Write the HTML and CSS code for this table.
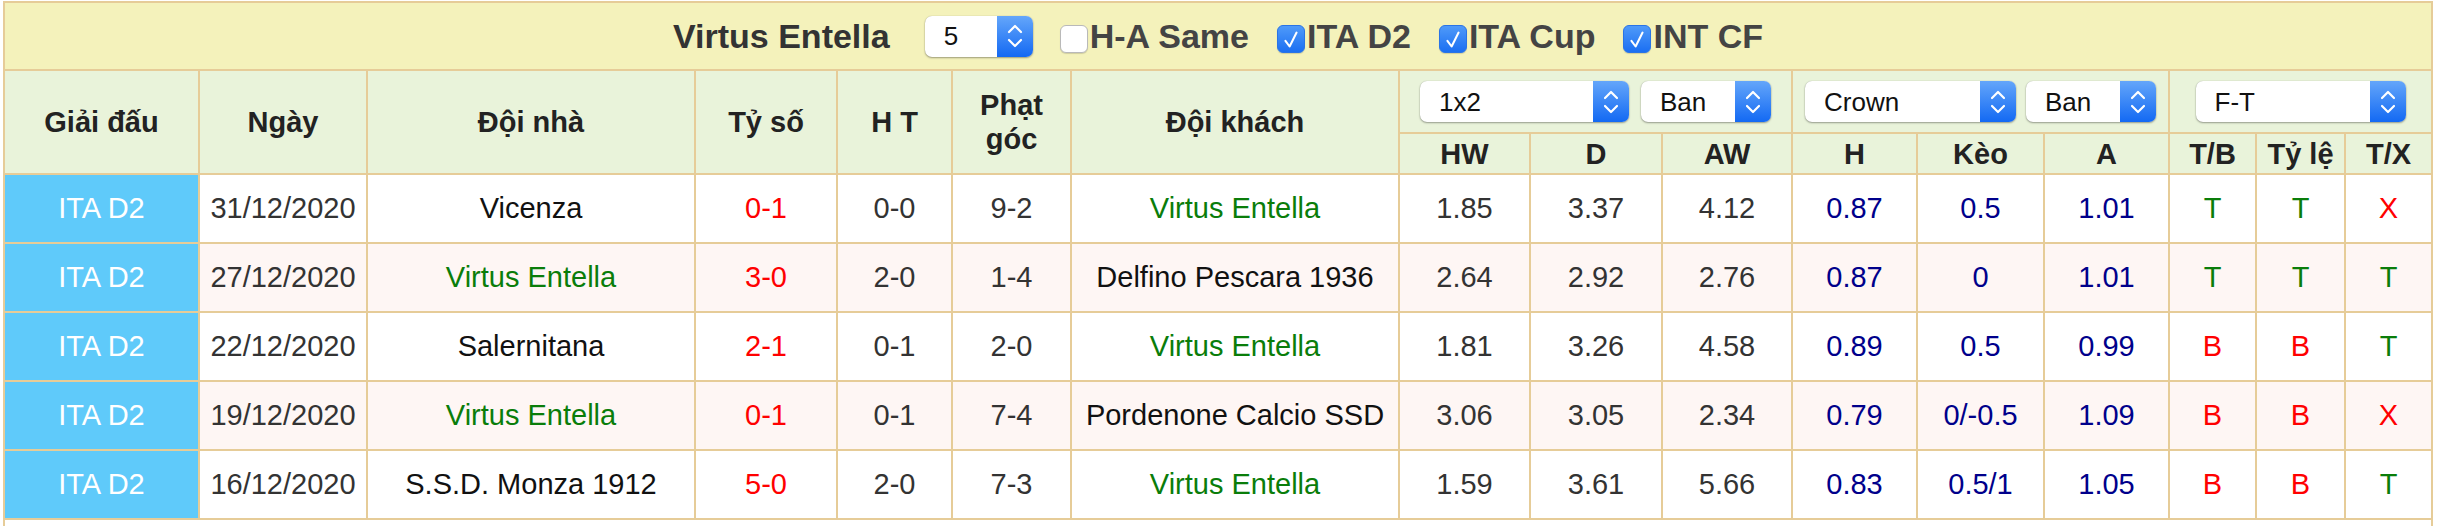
FILE: index.html
```html
<!DOCTYPE html>
<html lang="vi">
<head>
<meta charset="utf-8">
<title>Virtus Entella</title>
<link rel="stylesheet" href="styles.css">
</head>
<body>
<div class="wrap">
<table class="grid">
  <colgroup>
    <col class="w-league"><col class="w-date"><col class="w-team"><col class="w-score">
    <col class="w-ht"><col class="w-corner"><col class="w-team"><col class="w-hw">
    <col class="w-d"><col class="w-aw"><col class="w-h"><col class="w-keo">
    <col class="w-a"><col class="w-tb"><col class="w-tl"><col class="w-tx">
  </colgroup>
  <tr class="title-row">
    <td colspan="16">
      <div class="toolbar">
        <span class="team-title">Virtus Entella</span>
        <div class="sel sel-count"><span class="sel-text">5</span><span class="sel-btn"><svg viewBox="0 0 16 26" width="16" height="26"><path d="M2 9 L8 3 L14 9 M2 17 L8 23 L14 17"/></svg></span></div>
        <label class="chk"><span class="box"></span>H-A Same</label>
        <label class="chk"><span class="box on"><svg viewBox="0 0 28 28" width="28" height="28"><path d="M8 15 L12.5 21 L20 6"/></svg></span>ITA D2</label>
        <label class="chk"><span class="box on"><svg viewBox="0 0 28 28" width="28" height="28"><path d="M8 15 L12.5 21 L20 6"/></svg></span>ITA Cup</label>
        <label class="chk"><span class="box on"><svg viewBox="0 0 28 28" width="28" height="28"><path d="M8 15 L12.5 21 L20 6"/></svg></span>INT CF</label>
      </div>
    </td>
  </tr>
  <tr class="head-row">
    <th rowspan="2">Giải đấu</th>
    <th rowspan="2">Ngày</th>
    <th rowspan="2">Đội nhà</th>
    <th rowspan="2">Tỷ số</th>
    <th rowspan="2">H T</th>
    <th rowspan="2">Phạt góc</th>
    <th rowspan="2">Đội khách</th>
    <th colspan="3"><div class="sel-group g1">
      <div class="sel s-1x2"><span class="sel-text">1x2</span><span class="sel-btn"><svg viewBox="0 0 16 26" width="16" height="26"><path d="M2 9 L8 3 L14 9 M2 17 L8 23 L14 17"/></svg></span></div>
      <div class="sel s-ban"><span class="sel-text">Ban</span><span class="sel-btn"><svg viewBox="0 0 16 26" width="16" height="26"><path d="M2 9 L8 3 L14 9 M2 17 L8 23 L14 17"/></svg></span></div>
    </div></th>
    <th colspan="3"><div class="sel-group g2">
      <div class="sel s-crown"><span class="sel-text">Crown</span><span class="sel-btn"><svg viewBox="0 0 16 26" width="16" height="26"><path d="M2 9 L8 3 L14 9 M2 17 L8 23 L14 17"/></svg></span></div>
      <div class="sel s-ban"><span class="sel-text">Ban</span><span class="sel-btn"><svg viewBox="0 0 16 26" width="16" height="26"><path d="M2 9 L8 3 L14 9 M2 17 L8 23 L14 17"/></svg></span></div>
    </div></th>
    <th colspan="3"><div class="sel-group g3">
      <div class="sel s-ft"><span class="sel-text">F-T</span><span class="sel-btn"><svg viewBox="0 0 16 26" width="16" height="26"><path d="M2 9 L8 3 L14 9 M2 17 L8 23 L14 17"/></svg></span></div>
    </div></th>
  </tr>
  <tr class="sub-row">
    <th>HW</th><th>D</th><th>AW</th><th>H</th><th>Kèo</th><th>A</th><th>T/B</th><th>Tỷ lệ</th><th>T/X</th>
  </tr>
  <tr class="row">
    <td class="league">ITA D2</td><td>31/12/2020</td><td class="team">Vicenza</td><td class="red">0-1</td><td>0-0</td><td>9-2</td><td class="team green">Virtus Entella</td>
    <td>1.85</td><td>3.37</td><td>4.12</td><td class="navy">0.87</td><td class="navy">0.5</td><td class="navy">1.01</td><td class="green">T</td><td class="green">T</td><td class="red">X</td>
  </tr>
  <tr class="row alt">
    <td class="league">ITA D2</td><td>27/12/2020</td><td class="team green">Virtus Entella</td><td class="red">3-0</td><td>2-0</td><td>1-4</td><td class="team">Delfino Pescara 1936</td>
    <td>2.64</td><td>2.92</td><td>2.76</td><td class="navy">0.87</td><td class="navy">0</td><td class="navy">1.01</td><td class="green">T</td><td class="green">T</td><td class="green">T</td>
  </tr>
  <tr class="row">
    <td class="league">ITA D2</td><td>22/12/2020</td><td class="team">Salernitana</td><td class="red">2-1</td><td>0-1</td><td>2-0</td><td class="team green">Virtus Entella</td>
    <td>1.81</td><td>3.26</td><td>4.58</td><td class="navy">0.89</td><td class="navy">0.5</td><td class="navy">0.99</td><td class="red">B</td><td class="red">B</td><td class="green">T</td>
  </tr>
  <tr class="row alt">
    <td class="league">ITA D2</td><td>19/12/2020</td><td class="team green">Virtus Entella</td><td class="red">0-1</td><td>0-1</td><td>7-4</td><td class="team">Pordenone Calcio SSD</td>
    <td>3.06</td><td>3.05</td><td>2.34</td><td class="navy">0.79</td><td class="navy">0/-0.5</td><td class="navy">1.09</td><td class="red">B</td><td class="red">B</td><td class="red">X</td>
  </tr>
  <tr class="row">
    <td class="league">ITA D2</td><td>16/12/2020</td><td class="team">S.S.D. Monza 1912</td><td class="red">5-0</td><td>2-0</td><td>7-3</td><td class="team green">Virtus Entella</td>
    <td>1.59</td><td>3.61</td><td>5.66</td><td class="navy">0.83</td><td class="navy">0.5/1</td><td class="navy">1.05</td><td class="red">B</td><td class="red">B</td><td class="green">T</td>
  </tr>
  <tr class="foot-row"><td colspan="16"></td></tr>
</table>
</div>
</body>
</html>
```

FILE: styles.css
```css
html, body {
  margin: 0;
  padding: 0;
  background: #ffffff;
}

body {
  font-family: "Liberation Sans", Arial, sans-serif;
  color: #333333;
}

.wrap {
  padding: 1px 0 0 3px;
}

.grid {
  border-collapse: collapse;
  table-layout: fixed;
  width: 2430px;
  font-size: 29px;
}

.w-league { width: 195px; }
.w-date { width: 168px; }
.w-team { width: 328px; }
.w-score { width: 142px; }
.w-ht { width: 115px; }
.w-corner { width: 119px; }
.w-hw { width: 131px; }
.w-d { width: 132px; }
.w-aw { width: 130px; }
.w-h { width: 125px; }
.w-keo { width: 127px; }
.w-a { width: 125px; }
.w-tb { width: 87px; }
.w-tl { width: 89px; }
.w-tx { width: 87px; }

.grid td,
.grid th {
  border: 2px solid #e6cc98;
  padding: 0;
  text-align: center;
  vertical-align: middle;
}

/* title bar */
.title-row td {
  background: #f4f2bb;
  height: 66px;
}

.toolbar {
  display: flex;
  align-items: center;
  justify-content: center;
  font-size: 34px;
  font-weight: bold;
  color: #444444;
}

.team-title {
  color: #333333;
  margin-right: 35px;
}

.sel {
  display: inline-flex;
  height: 41px;
  border-radius: 7px;
  background: #ffffff;
  box-shadow: 0 1px 2px rgba(0, 0, 0, 0.35), 0 0 1px rgba(0, 0, 0, 0.25);
  overflow: hidden;
  font-size: 26px;
  font-weight: normal;
  color: #111111;
  text-align: left;
}

.sel-text {
  flex: 1;
  display: flex;
  align-items: center;
  padding-left: 19px;
}

.sel-btn {
  width: 36px;
  flex: none;
  display: flex;
  align-items: center;
  justify-content: center;
  background: linear-gradient(#64a6fa, #1369f3);
}

.sel-btn svg path {
  fill: none;
  stroke: #ffffff;
  stroke-width: 2.2;
  stroke-linecap: round;
  stroke-linejoin: round;
}

.sel-count {
  width: 108px;
  margin-right: 27px;
}

.chk {
  display: inline-flex;
  align-items: center;
  margin-right: 28px;
}

.chk:last-child {
  margin-right: 0;
}

.box {
  width: 28px;
  height: 28px;
  box-sizing: border-box;
  border-radius: 6px;
  margin: 5px 2px 0 0;
  background: #ffffff;
  border: 1px solid #b9b9b9;
  box-shadow: 0 1px 1px rgba(0, 0, 0, 0.15);
  display: flex;
}

.box.on {
  background: linear-gradient(#4f9af9, #1b6ff2);
  border-color: #2a74e6;
}

.box svg path {
  fill: none;
  stroke: #ffffff;
  stroke-width: 2.2;
  stroke-linecap: round;
  stroke-linejoin: round;
}

/* header */
.head-row th,
.sub-row th {
  background: #e9f3da;
  color: #222222;
  font-weight: bold;
  line-height: 34px;
}

.head-row th {
  height: 61px;
}

.sub-row th {
  height: 39px;
}

.sel-group {
  display: flex;
  justify-content: center;
  align-items: center;
}

.g1 { gap: 12px; }
.g2 { gap: 10px; }

.s-1x2 { width: 209px; }
.s-ban { width: 130px; }
.s-crown { width: 211px; }
.s-ft { width: 210px; }

/* body rows */
.row td {
  height: 67px;
  background: #ffffff;
  color: #333333;
}

.row.alt td {
  background: #fef6f4;
}

.row td.league {
  background: #5fcafa;
  color: #ffffff;
}

.row td.team {
  color: #111111;
}

.row td.green {
  color: #0a7d0a;
}

.row td.red {
  color: #ff0000;
}

.row td.navy {
  color: #00008b;
}

.foot-row td {
  height: 40px;
  background: #ffffff;
}
```
